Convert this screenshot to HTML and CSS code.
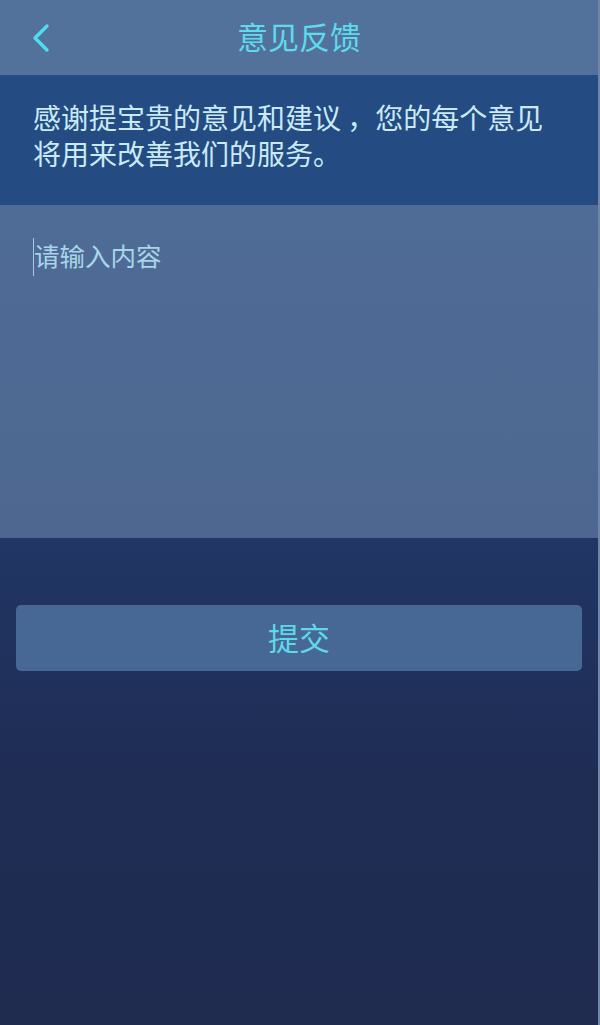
FILE: index.html
```html
<!DOCTYPE html>
<html lang="zh-CN">
<head>
<meta charset="utf-8">
<title>意见反馈</title>
<link rel="stylesheet" href="styles.css">
</head>
<body>
<div class="page">
  <header class="topbar">
    <button class="back" aria-label="返回">
      <svg width="22" height="30" viewBox="0 0 22 30"><path d="M17 3 L5 15 L17 27" fill="none" stroke="#4fdcee" stroke-width="3.4" stroke-linecap="round" stroke-linejoin="round"/></svg>
    </button>
    <h1 class="title">意见反馈</h1>
  </header>
  <section class="intro">
    <p>感谢提宝贵的意见和建议 ，您的每个意见将用来改善我们的服务。</p>
  </section>
  <div class="input-area">
    <span class="caret"></span><span class="placeholder">请输入内容</span>
  </div>
  <div class="actions">
    <button class="submit">提交</button>
  </div>
</div>
</body>
</html>
```
FILE: styles.css
```css
html, body {
  margin: 0;
  padding: 0;
  height: 100%;
}
body {
  font-family: "Noto Sans CJK SC", "Noto Sans", sans-serif;
  background: linear-gradient(180deg, #223d6b 0%, #213766 50%, #1f2d55 75%, #1f2b4f 100%);
  min-height: 1025px;
}
.page {
  display: flex;
  flex-direction: column;
  min-height: 1025px;
  border-right: 2px solid #6f86a8;
  box-sizing: border-box;
}
.topbar {
  height: 75px;
  background: #52729c;
  display: flex;
  align-items: center;
  justify-content: center;
  position: relative;
}
.back {
  position: absolute;
  left: 30px;
  top: 23px;
  background: none;
  border: 0;
  padding: 0;
  width: 22px;
  height: 30px;
}
.back svg { display: block; }
.title {
  margin: 0 0 4px 0;
  font-size: 31px;
  font-weight: 400;
  color: #5fd9ec;
  line-height: 1;
}
.intro {
  height: 130px;
  background: #244c82;
  box-sizing: border-box;
  padding: 24px 30px 0 33px;
}
.intro p {
  margin: 0;
  font-size: 28px;
  line-height: 36px;
  color: #c9eaf6;
}
.input-area {
  height: 333px;
  background: linear-gradient(180deg, #4f6c96 0%, #4d6790 100%);
  box-sizing: border-box;
  padding: 33px 33px 0 33px;
  display: flex;
  align-items: flex-start;
}
.caret {
  width: 1px;
  height: 38px;
  background: #a9c9dc;
}
.placeholder {
  font-size: 25.5px;
  line-height: 34px;
  color: #a8d6e8;
}
.actions {
  padding: 67px 16px 0 16px;
}
.submit {
  display: flex;
  align-items: center;
  justify-content: center;
  width: 100%;
  height: 66px;
  border: 0;
  border-radius: 5px;
  background: #476894;
  color: #5fd8ea;
  font-family: "Noto Sans CJK SC", "Noto Sans", sans-serif;
  font-size: 31px;
  padding: 0 0 4px 0;
}
```
